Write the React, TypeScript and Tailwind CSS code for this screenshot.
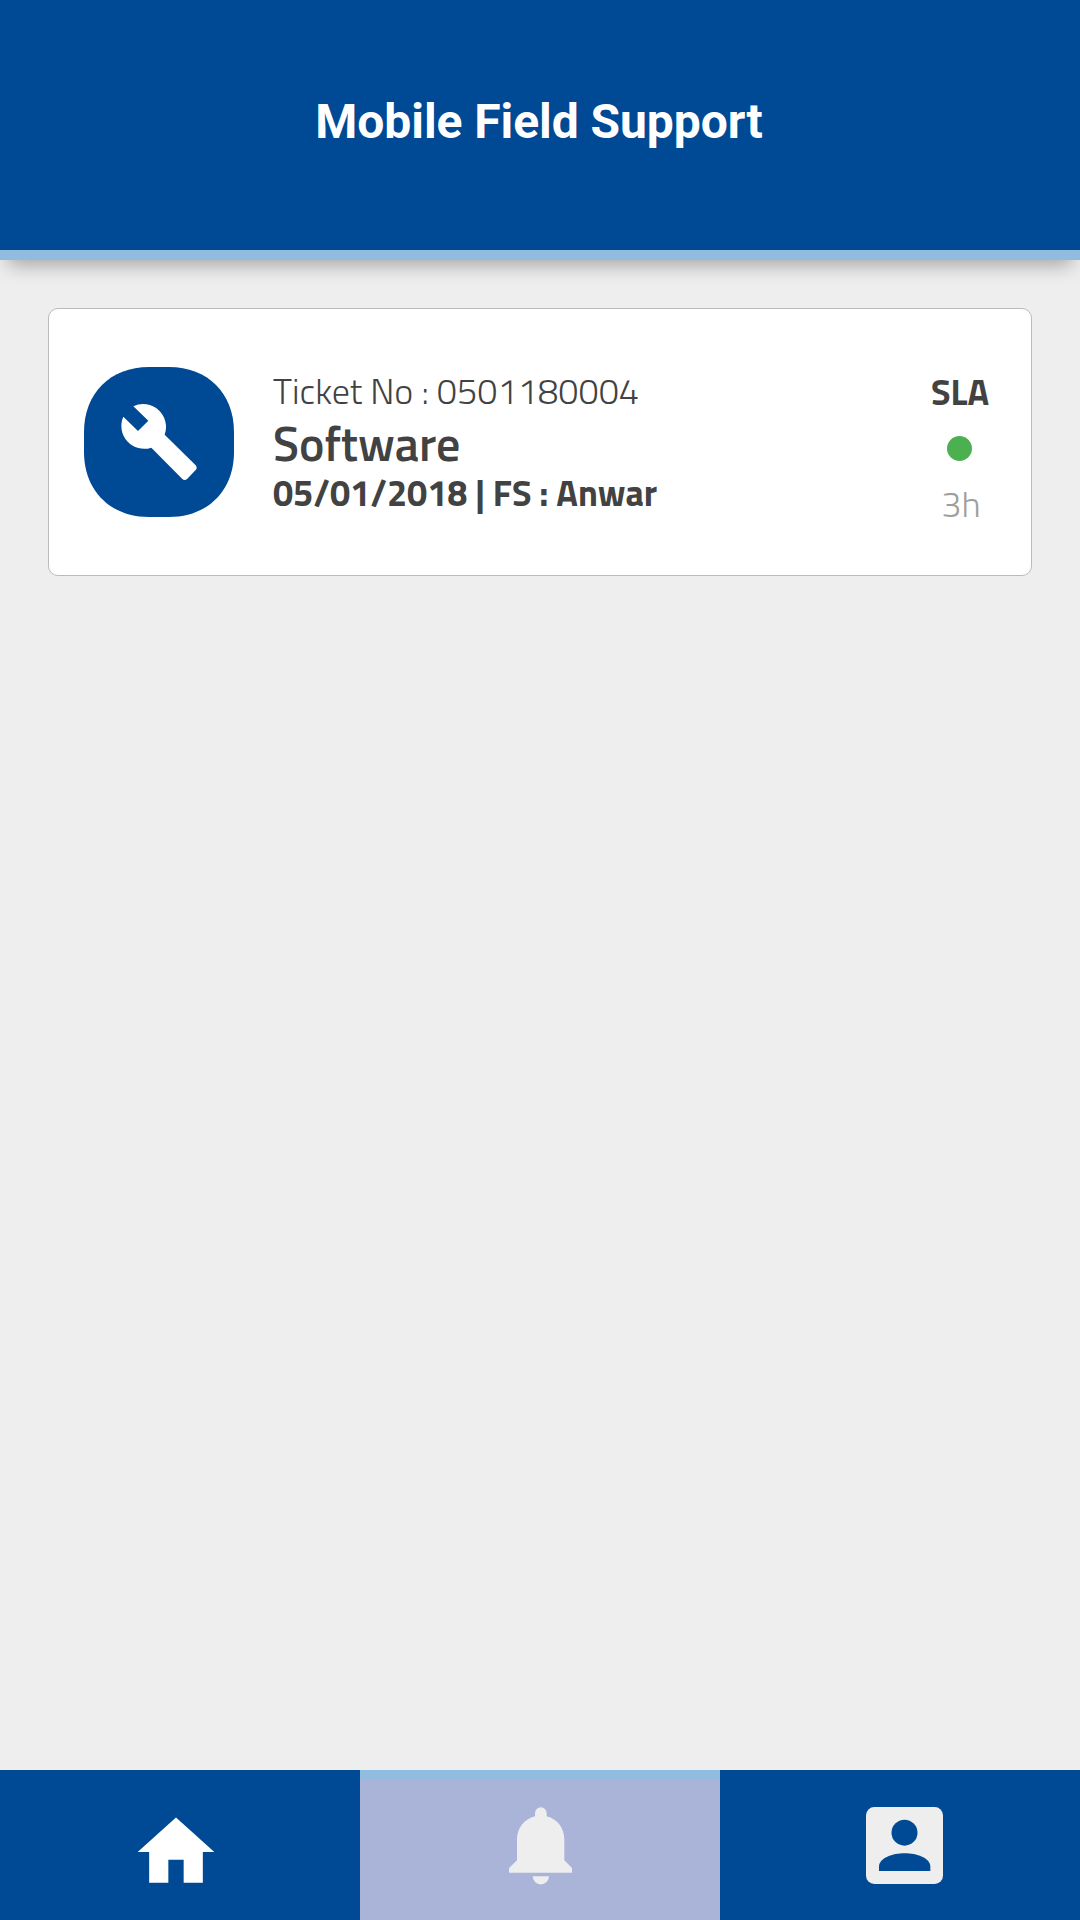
function WrenchBadge() {
  return (
    <svg className="block size-[150px] shrink-0" viewBox="0 0 450 450">
      <path
        fill="#004a95"
        d="M195 0H255C371 0 450 79 450 195V255C450 371 371 450 255 450H195C79 450 0 371 0 255V195C0 79 79 0 195 0Z"
      />
      <path
        fill="#fff"
        transform="translate(-44 -51)"
        d="M192 169A68.5 68.5 0 0 1 286 254L379 346Q382 349 382 354Q382 357 379 360L354 386Q350 390 346 390Q342 390 339 387L246 293A68.5 68.5 0 0 1 162 200L206 243L237 212Z"
      />
    </svg>
  );
}

function HomeIcon() {
  return (
    <svg className="-ml-[8px] mt-[14px] block size-[92px]" viewBox="0 0 24 24" fill="#fff">
      <path d="M10 20v-6h4v6h5v-8h3L12 3 2 12h3v8z" />
    </svg>
  );
}

function BellIcon() {
  return (
    <svg className="ml-[1px] block h-[78px] w-[63px]" viewBox="87 140 189 234" fill="#eee">
      <path d="M165 168V158a17.5 17.5 0 0 1 35 0V168C232 176 253 203 253 238V300L276 323V337H87V323L111 300V238C111 203 133 176 165 168Z" />
      <path d="M158 348h49a24.5 24.5 0 0 1-49 0z" />
    </svg>
  );
}

function AccountIcon() {
  return (
    <svg className="ml-[9px] block size-[77px]" viewBox="0 0 231 231">
      <rect width="231" height="231" rx="25" fill="#eee" />
      <circle cx="115.5" cy="77" r="39" fill="#004a95" />
      <path fill="#004a95" d="M39 192V179C39 153 80 139 116 139C152 139 193 153 193 179V192Z" />
    </svg>
  );
}

export default function App() {
  return (
    <div className="flex h-[1920px] w-[1080px] flex-col overflow-hidden bg-[#eee] font-['Titillium_Web','Roboto',sans-serif] text-[#424242]">
      <header className="flex h-[260px] shrink-0 items-center justify-center border-b-[10px] border-[#90bddf] bg-[#004a95] pb-[6px] shadow-[0_13px_18px_-8px_rgba(0,0,0,0.31)]">
        <h1 className="mr-[2px] whitespace-nowrap font-['Roboto',sans-serif] text-[48px] leading-none font-bold tracking-[-0.06px] text-white">
          Mobile Field Support
        </h1>
      </header>

      <main className="flex-1 px-12 pt-12">
        <article className="flex h-[268px] items-center rounded-[10px] border border-[#bbb] bg-white pl-[35px] pr-[42px]">
          <WrenchBadge />
          <div className="ml-[39px] flex flex-1 flex-col whitespace-nowrap">
            <p className="text-[36px] leading-[48px] font-light tracking-[0.06px]">Ticket No : 0501180004</p>
            <p className="text-[48px] leading-[57px] font-semibold tracking-[-0.1px]">Software</p>
            <p className="pb-[4px] text-[36px] leading-[41px] font-bold tracking-[-0.04px]">05/01/2018 | FS : Anwar</p>
          </div>
          <div className="mt-[11px] flex w-[58px] flex-col items-center">
            <p className="text-[36px] leading-[52px] font-bold">SLA</p>
            <span className="mt-[18px] mb-[17px] mr-[1px] size-[25px] rounded-full bg-[#4caf50]" />
            <p className="pl-[2px] text-[36px] leading-[52px] font-light text-[#9e9e9e]">3h</p>
          </div>
        </article>
      </main>

      <nav className="grid h-[150px] shrink-0 grid-cols-3">
        <a className="flex items-center justify-center bg-[#004a95]">
          <HomeIcon />
        </a>
        <a className="flex items-center justify-center border-t-[10px] border-[#90bddf] bg-[#aab3d8] pb-[9px]">
          <BellIcon />
        </a>
        <a className="flex items-center justify-center bg-[#004a95]">
          <AccountIcon />
        </a>
      </nav>
    </div>
  );
}
